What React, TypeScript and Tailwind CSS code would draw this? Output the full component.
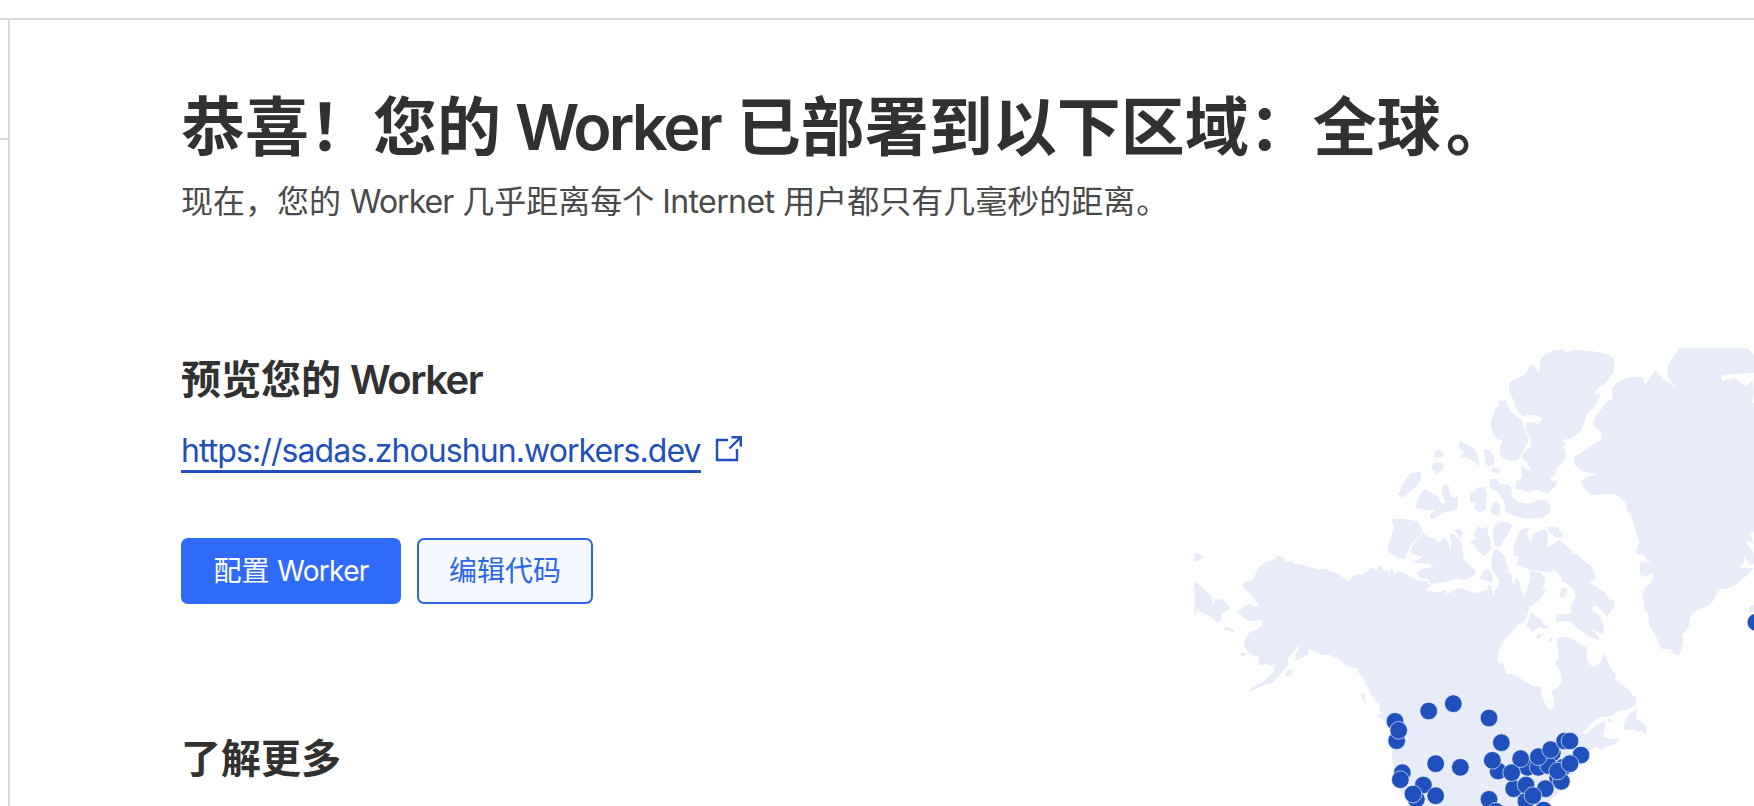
const LAND = "#e8ecf8";

// Landmasses, grouped by the local origin each set of outlines is drawn from.
const west = [
  "187,138 194,125 212,123 223,113 229,95 238,80 262,64 278,62 294,46 310,52 317,67 325,62 340,65 343,72 366,74 390,82 418,88 434,86 477,103 503,124 528,102 546,104 572,88 583,85 587,95 597,75 613,90 623,107 636,84 640,107 656,95 668,96 690,111 722,125 740,125 752,135 735,152 770,158 796,151 803,165 813,152 842,158 870,150 870,800 690,800 655,740 640,680 636,655 638,630 640,560 620,545 597,532 594,520 615,523 602,512 599,493 585,485 583,473 570,457 568,446 556,433 554,420 537,400 533,384 505,381 490,370 474,355 445,345 427,345 390,327 384,332 383,344 346,363 346,343 360,322 355,318 340,337 322,356 327,372 310,393 275,431 258,433 205,456 220,441 252,424 280,397 287,372 270,377 262,370 250,375 235,374 235,350 215,345 202,333 192,313 195,297 208,277 225,272 240,262 249,255 244,240 222,243 197,240 171,213 213,188 217,198 238,200 230,187 213,165",
  "43,40 56,40 70,51 56,62 43,63",
  "43,122 98,171 97,190 104,193 102,177 130,179 151,205 140,215 124,219 124,244 113,248 87,227 56,214 54,203 46,224 43,230",
  "131,261 150,264 163,273 156,278 145,271 132,270",
  "177,342 190,337 198,342 193,350",
  "315,400 330,388 340,394 334,405 320,411",
  "542,462 556,461 555,480 563,496 551,484",
];

const north = [
  "385,183 407,180 420,213 456,241 465,275 478,300 463,325 444,360 425,362 400,354 390,342 391,318 398,300 379,298 368,280 361,252 375,205 387,200",
  "417,130 433,117 445,114 465,103 482,74 494,78 506,100 513,55 530,41 550,31 580,28 586,37 612,30 670,34 710,42 732,55 732,97 707,128 688,140 672,161 693,163 672,203 650,224 636,270 602,297 575,300 586,310 582,322 588,346 580,365 562,380 556,400 542,414 543,424 561,422 560,434 533,460 503,450 475,455 438,446 438,427 456,413 452,375 486,396 470,365 455,355 463,333 482,320 484,298 468,275 467,247 495,248 503,256 519,235 495,225 457,228 439,208 430,180 418,160",
  "268,303 300,318 320,335 330,378 298,355 271,352 281,335 268,325",
  "191,352 196,336 206,328 223,342 210,353",
  "183,383 190,370 203,365 221,372 219,386 200,403",
  "83,463 102,428 122,398 134,400 153,393 152,420 142,437 118,457 98,473",
  "137,503 150,461 163,448 205,470 213,489 229,490 216,460 217,442 226,432 237,440 243,470 250,474 260,468 265,475 261,510 217,518 193,537 179,534 180,523 198,508 165,510",
  "300,453 314,455 320,443 345,440 350,465 348,508 330,517 316,510 315,486 300,487",
  "341,328 357,330 373,350 371,371 355,382 346,368",
  "364,385 385,382 393,395 386,400 366,397",
  "360,418 380,417 390,431 417,434 425,445 424,468 443,486 475,491 505,481 530,480 541,495 539,520 520,532 478,537 440,531 407,515 402,485 382,455 357,442",
  "360,512 367,494 379,484 390,497 391,520 385,528 369,523",
];

const center = [
  "0,145 12,145 18,155 28,137 43,160 51,147 55,162 66,144 73,162 85,155 97,157 120,170 152,185 170,184 182,195 164,212 200,218 226,211 234,225 243,211 272,204 310,219 342,213 357,205 352,195 364,195 369,228 376,207 384,203 388,180 365,150 364,120 372,88 385,90 402,105 416,150 411,160 424,160 428,195 440,173 450,188 452,210 461,230 471,208 480,180 481,153 510,158 526,175 524,190 518,203 527,210 515,232 490,254 478,262 470,290 460,308 443,314 425,338 408,355 396,368 385,395 384,428 400,432 409,463 425,462 460,480 485,497 515,501 514,520 527,555 541,572 552,560 552,535 543,513 560,505 575,485 574,462 556,430 567,410 562,370 560,355 580,350 606,353 625,370 650,383 650,415 658,432 673,441 690,430 703,400 715,430 738,468 735,480 750,490 780,512 784,522 798,535 798,555 775,568 740,575 720,590 695,590 675,600 655,620 636,642 650,640 680,615 705,603 706,628 700,650 725,657 753,657 735,672 705,682 690,692 686,680 660,690 655,705 635,735 605,765 585,800 545,838 535,860 130,860 80,780 68,740 66,690 68,600 30,575 28,552 8,530 0,515",
  "64,-4 95,-4 143,4 160,36 120,78 104,118 84,115 50,90 60,60 73,22",
  "160,40 175,52 190,53 207,68 224,52 236,68 240,94 245,70 238,42 250,40 274,68 282,120 318,152 313,168 282,180 262,176 225,186 183,193 176,178 150,174 142,160 153,148 192,140 178,131 130,129 155,110 120,100 130,72",
  "250,28 272,27 279,38 268,58 262,42",
  "299,65 319,58 311,43 323,18 334,26 355,20 352,45 362,58 363,88 342,109 325,96 313,75",
  "372,20 385,6 410,6 427,16 413,45 388,82 375,80 368,50",
  "328,175 345,147 360,153 370,172 366,187 345,180",
  "439,60 450,30 478,20 471,45 482,66 490,42 520,28 533,32 532,82 570,60 605,92 606,106 621,100 640,122 662,135 671,150 678,176 660,187 690,208 709,221 717,238 732,240 731,262 711,290 682,257 667,258 667,272 690,288 702,318 701,344 660,323 687,350 687,362 650,345 620,322 597,302 556,306 562,284 605,280 601,258 617,230 611,208 590,190 574,182 575,172 551,148 541,158 480,150 440,132 447,112 432,105 432,80",
  "529,22 563,22 579,42 577,55 552,50",
  "482,275 498,290 516,300 522,318 534,315 536,323 520,328 510,318 485,336 480,322 464,322 474,308",
  "498,352 505,341 518,342 510,353 502,358",
  "537,354 546,352 545,366 539,368",
  "762,610 775,585 800,564 798,598 812,602 830,622 826,645 815,632 802,636 790,628 762,630",
  "708,595 722,598 732,607 715,604",
  "23,580 45,588 60,600 45,603 25,590",
];

const east = [
  "376,24 410,24 416,28 418,24 580,24 600,46 600,98 540,102 501,108 505,123 545,115 575,141 597,120 600,155 594,186 600,190 600,577 589,577 600,612 579,603 577,612 600,640 600,672 588,675 569,646 571,662 558,684 600,685 570,714 545,735 515,747 500,747 490,757 475,786 455,802 440,806 415,820 407,834 404,862 383,885 388,905 377,944 362,944 348,927 324,927 315,914 308,894 287,858 282,824 268,800 271,783 265,771 274,742 290,729 296,714 298,695 283,706 270,712 258,703 257,680 261,663 290,671 265,641 254,645 245,636 256,604 230,525 216,508 216,490 188,465 160,461 110,466 98,454 79,424 105,409 127,404 84,393 59,371 60,352 140,299 144,277 116,254 124,230 160,184 177,175 173,143 195,124 230,111 263,110 275,133 303,91 328,119 345,127 365,149 340,108 342,75",
  "583,814 588,798 600,794 600,816",
];

// Data-centre pins in drawing order.
const pins: [number, number][] = [
  [75, 604], [80, 662], [86, 631], [176, 573], [250, 551], [357, 594],
  [394, 668], [384, 753], [367, 721], [197, 731], [271, 742], [97, 758],
  [91, 779], [160, 795], [139, 838], [129, 822], [197, 827], [357, 838],
  [378, 874], [431, 806], [473, 742], [505, 742], [547, 699], [536, 737],
  [425, 758], [452, 716], [505, 710], [542, 689], [584, 663], [600, 663],
  [633, 705], [579, 742], [563, 774], [574, 784], [526, 806], [563, 753],
  [600, 731], [468, 843], [468, 795], [521, 870], [489, 827],
];

function Shapes({ points }: { points: string[] }) {
  return (
    <>
      {points.map((p) => (
        <polygon key={p} points={p} fill={LAND} />
      ))}
    </>
  );
}

function NetworkMap() {
  return (
    <svg className="block h-[458px] w-[560px]" viewBox="1194 348 560 458">
      <g transform="translate(1180 540) scale(.33333)"><Shapes points={west} /></g>
      <g transform="translate(1370 340) scale(.33333)"><Shapes points={north} /></g>
      <g transform="translate(1370 520) scale(.33333)">
        <Shapes points={center} />
        <polygon points="570,214 577,203 590,205 592,222 580,234 570,230" fill={LAND} />
        <path d="M700 625 704 645 715 655 727 653 724 644 709 642z" fill="#fff" />
      </g>
      <g transform="translate(1554 340) scale(.33333)"><Shapes points={east} /></g>
      <g transform="translate(1370 520) scale(.33333)" fill="#1f50bb" stroke="#fff" strokeOpacity=".62" strokeWidth="3">
        {pins.map(([x, y]) => (
          <circle key={`${x}-${y}`} cx={x} cy={y} r="26.5" />
        ))}
        <circle cx="1158" cy="307" r="26.5" />
      </g>
    </svg>
  );
}

function ExternalIcon() {
  return (
    <svg className="mt-[7px] ml-3.5 h-[28px] w-[28px]" viewBox="0 0 28 28" fill="none" stroke="#1f50bb" strokeWidth="2.4">
      <path d="M13 5H2v20h20V14M16.500 2.200h9.300V11.500M25.500 2.500 14.500 13.500" />
    </svg>
  );
}

export default function App() {
  return (
    <div className="h-[806px] w-[1754px] overflow-hidden bg-white pt-[18px] font-['Inter','Noto_Sans_CJK_SC',sans-serif] text-[#313131]">
      <div className="flex h-[788px] border-t-2 border-[#d9d9d9]">
        <aside className="w-[10px] shrink-0 border-r-2 border-[#d9d9d9]">
          <div className="h-[120px] border-b-2 border-[#d9d9d9]" />
        </aside>
        <main className="flex flex-1 flex-col pl-[171px] whitespace-nowrap">
          <h1 className="mt-[67px] h-20 text-[64px] leading-[80px] font-semibold">
            恭喜！您的<span className="ml-[14px] mr-[17px] text-[63px] tracking-[-2.900px]">Worker</span>已部署到以下区域：全球<span className="ml-[5px]">。</span>
          </h1>
          <p className="mt-[11px] h-12 text-[32px] leading-[48px] text-[#4a4a4a]">
            现在，您的 <span className="tracking-[-1px]">Worker</span> 几乎距离每个<span className="ml-[8px] mr-[9px] tracking-[-0.6px]">Internet</span>用户都只有几毫秒的距离<span className="ml-[1px]">。</span>
          </p>
          <div className="mt-[122px] flex flex-1 justify-between">
            <section>
              <h2 className="mt-[4px] h-[56px] text-[40px] leading-[56px] font-semibold">
                预览您的<span className="ml-[9px] tracking-[-1.500px]">Worker</span>
              </h2>
              <div className="mt-[20px] flex h-[45px] items-start">
                <a className="h-[45px] border-b-[3px] border-[#1f50bb] pt-[3px] text-[32px] leading-[40px] tracking-[-0.910px] text-[#1f50bb]">
                  https://sadas.zhoushun.workers.dev
                </a>
                <ExternalIcon />
              </div>
              <div className="mt-[65px] flex gap-4">
                <button className="h-[66px] w-[220px] rounded-[7px] bg-[#2f6bf8] text-[28px] text-white">
                  配置 <span className="tracking-[-0.7px]">Worker</span>
                </button>
                <button className="h-[66px] w-[176px] rounded-[7px] border-2 border-[#2c67e5] bg-[#f5f8fe] text-[28px] text-[#2c67e5]">
                  编辑代码
                </button>
              </div>
              <h2 className="mt-[127px] h-[56px] text-[40px] leading-[56px] font-semibold">了解更多</h2>
            </section>
            <NetworkMap />
          </div>
        </main>
      </div>
    </div>
  );
}
